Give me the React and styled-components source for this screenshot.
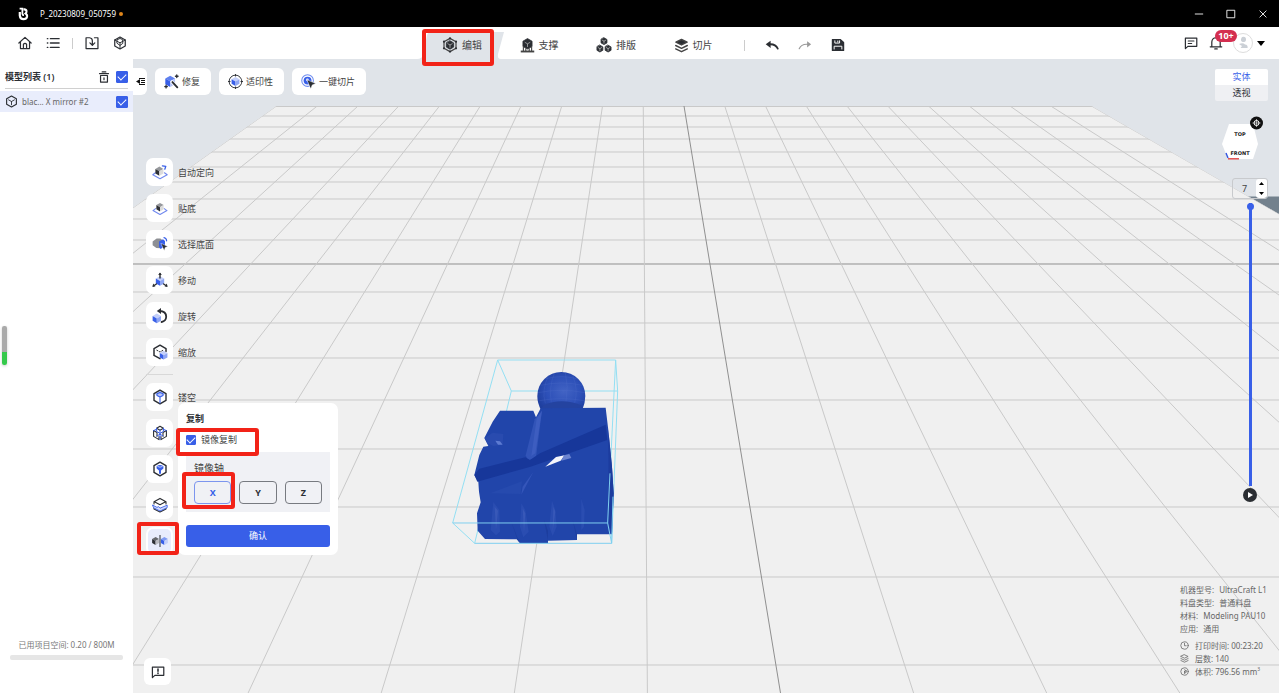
import { useState } from 'react';
import styled, { createGlobalStyle, css } from 'styled-components';

const colors = {
    ink: '#2b2e33',
    text: '#444',
    muted: '#777',
    blue: '#385fe8',
    scene: '#e0e4e9',
    red: '#f22318',
};

const GlobalStyle = createGlobalStyle`
    * {
        box-sizing: border-box;
    }
    body {
        margin: 0;
        background: #fff;
        color: ${ colors.text };
        font: 9px/12px "Noto Sans", "Noto Sans CJK SC", sans-serif;
    }
    button, input {
        font: inherit;
        color: inherit;
    }
    button {
        padding: 0;
        border: 0;
        background: none;
        cursor: pointer;
    }
    svg {
        display: block;
        flex: none;
    }
`;

const Page = styled.div`
    display: flex;
    flex-direction: column;
    min-height: 100vh;
`;

/* title bar */

const TitleBar = styled.header`
    display: flex;
    align-items: center;
    height: 27px;
    padding-left: 18px;
    background: #000;
    color: #fff;
`;

const ProjectName = styled.span`
    margin: 0 3px 0 11px;
    font-size: 8px;
`;

const UnsavedDot = styled.span`
    width: 4px;
    height: 4px;
    border-radius: 50%;
    background: #e0861a;
`;

const WindowButtons = styled.div`
    display: flex;
    margin-left: auto;
`;

const WindowButton = styled.button`
    display: grid;
    place-items: center;
    width: 32px;
    height: 27px;
`;

/* main toolbar */

const Toolbar = styled.nav`
    display: grid;
    grid-template-columns: 1fr auto 1fr;
    height: 32px;
    background: #fff;
`;

const ToolbarGroup = styled.div`
    display: flex;
    align-items: center;
    gap: ${ props => props.$gap || 0 }px;
`;

const LeftGroup = styled(ToolbarGroup)`
    padding-left: 17px;
`;

const RightGroup = styled(ToolbarGroup)`
    justify-content: flex-end;
    padding-right: 14px;
`;

const HistoryGroup = styled(ToolbarGroup)`
    padding-top: 4px;
`;

const IconButton = styled.button`
    position: relative;
    display: grid;
    place-items: center;
    width: ${ props => props.$width || 15 }px;
    height: 24px;
    color: ${ colors.ink };
`;

const Separator = styled.span`
    width: 1px;
    height: 11px;
    margin: 0 ${ props => props.$right }px 0 ${ props => props.$left }px;
    background: #ccc;
`;

const Tab = styled.button`
    position: relative;
    display: flex;
    align-items: center;
    justify-content: center;
    gap: 4px;
    width: 77px;
    height: 32px;
    padding: 4px 2px 0 0;
    font-size: 10px;
    & > svg, & > span {
        z-index: 1;
    }
`;

const TabShape = styled.svg`
    position: absolute;
    left: -8px;
    bottom: 0;
`;

const Highlight = styled.i`
    position: absolute;
    z-index: 3;
    inset: ${ props => props.$inset };
    border: 4px solid ${ colors.red };
    border-radius: 3px;
    pointer-events: none;
`;

const Badge = styled.b`
    position: absolute;
    z-index: 1;
    left: 7px;
    top: -1px;
    width: 22px;
    border-radius: 6px;
    background: #d42f50;
    color: #fff;
    font-size: 9px;
    line-height: 12px;
    text-align: center;
`;

const Avatar = styled.span`
    display: grid;
    place-items: center;
    width: 20px;
    height: 20px;
    border: 1px solid #ddd;
    border-radius: 50%;
    background: #fff;
`;

/* model list */

const Body = styled.div`
    display: flex;
    flex: 1;
`;

const Sidebar = styled.aside`
    position: relative;
    display: flex;
    flex-direction: column;
    flex: 0 0 133px;
    background: #fff;
`;

const ListHeader = styled.div`
    display: flex;
    align-items: center;
    gap: 5px;
    height: 30px;
    margin: 0 5px 2px;
    padding-top: 6px;
    border-bottom: 1px solid #d0d0d0;
    color: ${ colors.ink };
`;

const ListTitle = styled.h2`
    flex: 1;
    margin: 0;
    font-size: 9px;
    font-weight: 600;
`;

const ModelRow = styled.label`
    display: flex;
    align-items: center;
    gap: 4px;
    height: 21px;
    padding: 0 5px;
    background: #e9edfc;
    color: #666;
    font-size: 8px;
    & > span {
        flex: 1;
    }
`;

const Check = styled.input`
    position: relative;
    flex: none;
    appearance: none;
    width: ${ props => props.$size }px;
    height: ${ props => props.$size }px;
    margin: 0;
    border: 1px solid ${ colors.blue };
    border-radius: 1px;
    &:checked {
        background: ${ colors.blue };
    }
    &:checked::after {
        content: "";
        position: absolute;
        left: 50%;
        top: 50%;
        width: 7px;
        height: 4px;
        border: solid #fff;
        border-width: 0 0 1px 1px;
        transform: translate(-50%, -70%) rotate(-45deg);
    }
`;

const Storage = styled.div`
    margin: auto 10px 33px;
    color: ${ colors.muted };
    font-size: 8px;
    text-align: center;
    progress {
        display: block;
        appearance: none;
        width: 100%;
        height: 5px;
        margin-top: 4px;
        border: 0;
    }
    progress::-webkit-progress-bar {
        border-radius: 2px;
        background: #e6e6e6;
    }
    progress::-webkit-progress-value {
        background: #e6e6e6;
    }
`;

const EdgeMeter = styled.div`
    position: absolute;
    left: 2px;
    top: 267px;
    width: 5px;
    height: 39px;
    border-radius: 2px;
    background: linear-gradient(#aaa 0 26px, #35c94b 26px);
    box-shadow: 0 1px 3px #ccc;
`;

/* workspace */

const Workspace = styled.main`
    position: relative;
    display: flex;
    flex: 1;
    justify-content: space-between;
    background: ${ colors.scene };
`;

const SceneSvg = styled.svg`
    position: absolute;
    inset: 0;
    width: 100%;
    height: 100%;
`;

const LeftTools = styled.div`
    position: relative;
    display: flex;
    flex-direction: column;
    align-items: flex-start;
    padding: 9px 0 8px;
`;

const RightTools = styled.div`
    position: relative;
    display: flex;
    flex-direction: column;
    align-items: flex-end;
    padding: 10px 11px 15px 0;
`;

const PillRow = styled.div`
    display: flex;
    gap: 8px;
`;

const Pill = styled.button`
    display: flex;
    align-items: center;
    gap: 3px;
    height: 27px;
    padding: 0 11px 0 9px;
    border-radius: 6px;
    background: #fff;
`;

const CollapseButton = styled(Pill)`
    justify-content: center;
    width: 14px;
    padding: 0;
    border-radius: 0 6px 6px 0;
`;

const Rail = styled.div`
    position: relative;
    display: flex;
    flex-direction: column;
    gap: 8px;
    margin: 63px 0 0 13px;
`;

const Tool = styled.button`
    display: flex;
    align-items: center;
    gap: 5px;
`;

const ToolLabel = styled.span`
    padding-top: 2px;
`;

const ToolIcon = styled.span`
    display: grid;
    place-items: center;
    width: 27px;
    height: 28px;
    border-radius: 7px;
    background: ${ props => props.$active ? '#e8ecfc' : '#fff' };
    ${ props => props.$active && css`
        box-shadow: inset 0 0 0 2px #fff;
    ` }
`;

const RailDivider = styled.hr`
    width: 27px;
    height: 1px;
    margin: 0;
    border: 0;
    background: #d8d8d8;
`;

const FeedbackButton = styled.button`
    display: grid;
    place-items: center;
    width: 27px;
    height: 27px;
    margin: auto 0 0 11px;
    border-radius: 6px;
    background: #fff;
    color: ${ colors.ink };
`;

/* mirror panel */

const Panel = styled.form`
    position: absolute;
    left: 32px;
    bottom: 0;
    z-index: 2;
    display: flex;
    flex-direction: column;
    width: 160px;
    padding: 10px 8px 8px;
    border-radius: 7px;
    background: #fff;
`;

const PanelTitle = styled.h3`
    margin: 0 0 9px;
    color: ${ colors.ink };
    font-size: 9px;
    line-height: 12px;
`;

const CheckLabel = styled.label`
    position: relative;
    display: flex;
    align-items: center;
    gap: 5px;
    height: 12px;
    margin-bottom: 6px;
`;

const AxisBox = styled.fieldset`
    min-width: 0;
    height: 60px;
    margin: 0 0 13px;
    padding: 10px 8px 8px;
    border: 0;
    background: #f0f1f5;
`;

const AxisTitle = styled.div`
    margin-bottom: 7px;
    font-size: 10px;
`;

const AxisRow = styled.div`
    display: flex;
    gap: 8px;
`;

const AxisButton = styled.button`
    position: relative;
    flex: 1;
    height: 23px;
    border: 1px solid ${ props => props.$active ? '#7c95ee' : '#777a80' };
    border-radius: 4px;
    color: ${ props => props.$active ? colors.blue : colors.ink };
    font-weight: 700;
`;

const ConfirmButton = styled.button`
    height: 22px;
    border-radius: 3px;
    background: ${ colors.blue };
    color: #fff;
`;

/* view controls */

const ViewToggle = styled.div`
    display: grid;
    width: 53px;
    border-radius: 2px;
    overflow: hidden;
`;

const ViewButton = styled.button`
    height: 16px;
    background: ${ props => props.$active ? '#fff' : '#eff0f3' };
    color: ${ props => props.$active ? colors.blue : colors.ink };
`;

const CubeView = styled.svg`
    margin: 14px 4px 18px 0;
`;

const LayerControl = styled.div`
    display: flex;
    flex-direction: column;
    align-items: center;
    width: 36px;
`;

const LayerInput = styled.div`
    display: flex;
    width: 36px;
    height: 21px;
    margin-bottom: 4px;
    border: 1px solid #c8cacd;
    border-radius: 3px;
    input {
        width: 23px;
        padding: 0;
        border: 0;
        background: none;
        text-align: center;
        outline: 0;
    }
`;

const Stepper = styled.div`
    display: grid;
    flex: 1;
    border-radius: 3px;
    background: #fff;
    button {
        display: grid;
        place-items: center;
    }
`;

const LayerSlider = styled.input`
    appearance: none;
    writing-mode: vertical-lr;
    direction: rtl;
    width: 7px;
    height: 283px;
    margin: 0 0 2px;
    background: linear-gradient(${ colors.blue }, ${ colors.blue }) center / 3px 100% no-repeat;
    &::-webkit-slider-thumb {
        appearance: none;
        width: 7px;
        height: 7px;
        border-radius: 50%;
        background: ${ colors.blue };
    }
`;

const PlayButton = styled.button`
    display: grid;
    place-items: center;
    width: 14px;
    height: 14px;
    border-radius: 50%;
    background: ${ colors.ink };
`;

const PrintInfo = styled.dl`
    width: 88px;
    margin: auto 0 0;
    color: #666;
    font-size: 8px;
    line-height: 13px;
    white-space: nowrap;
`;

const InfoRow = styled.div`
    display: flex;
    align-items: center;
    gap: ${ props => props.$icon ? 2 : 5 }px;
    margin-top: ${ props => props.$gap ? 4 : 0 }px;
    & > svg {
        margin-right: 4px;
    }
    dd {
        margin: 0;
    }
    sup {
        font-size: 5px;
        line-height: 1px;
    }
`;

/* icons */

const Svg = ( { size = 14, children, ...rest } ) => (
    <svg width={ size } height={ size } viewBox="0 0 16 16" fill="none" stroke="currentColor"
        strokeWidth="1.4" strokeLinejoin="round" strokeLinecap="round" aria-hidden="true" { ...rest }>
        { children }
    </svg>
);

// Shaded cube centred on cx, cy
function Solid( { cx = 8, cy = 8, r = 4, top = '#c3cffa', left = colors.blue, right = '#8fa6f3' } ) {
    const w = r * 0.87;
    const h = r / 2;
    return (
        <g stroke="none">
            <path fill={ top } d={ `M${ cx } ${ cy - r }l${ w } ${ h }l${ -w } ${ h }l${ -w } ${ -h }z` } />
            <path fill={ left } d={ `M${ cx - w } ${ cy - h }l${ w } ${ h }v${ r }l${ -w } ${ -h }z` } />
            <path fill={ right } d={ `M${ cx + w } ${ cy - h }l${ -w } ${ h }v${ r }l${ w } ${ -h }z` } />
        </g>
    );
}

// Dark cube with light inner edges, used in the tabs
function DarkCube( { cx, cy, r, edge = 0.6 } ) {
    const w = r * 0.87;
    const h = r / 2;
    return (
        <>
            <path fill={ colors.ink } stroke={ colors.ink } strokeWidth=".8"
                d={ `M${ cx } ${ cy - r }l${ w } ${ h }v${ r }l${ -w } ${ h }l${ -w } ${ -h }v${ -r }z` } />
            <path stroke="#ddd" strokeWidth={ edge }
                d={ `M${ cx - w * 0.6 } ${ cy - h * 0.6 }L${ cx } ${ cy }L${ cx + w * 0.6 } ${ cy - h * 0.6 }M${ cx } ${ cy }v${ r * 0.6 }` } />
        </>
    );
}

const HEX = 'M8 1.2l6 3.4v6.8l-6 3.4l-6-3.4V4.6z';

const EditIcon = () => (
    <Svg size={ 16 } strokeWidth="1.2">
        <path d="M8 1.4l6 3.3v6.6l-6 3.3l-6-3.3V4.7z" />
        <DarkCube cx={ 8 } cy={ 8 } r={ 4.2 } />
        <g fill={ colors.ink } stroke="none">
            { [ [ 8, 1.4 ], [ 14, 4.7 ], [ 14, 11.3 ], [ 8, 14.6 ], [ 2, 11.3 ], [ 2, 4.7 ] ].map( ( [ x, y ] ) => (
                <circle key={ `${ x }-${ y }` } cx={ x } cy={ y } r="1.1" />
            ) ) }
        </g>
    </Svg>
);

const SupportIcon = () => (
    <Svg size={ 15 } strokeLinecap="butt">
        <DarkCube cx={ 8 } cy={ 6.2 } r={ 5.6 } />
        <path d="M3.6 9v5M6.2 11v3M9.8 11v3M12.4 9v5" strokeWidth="1.2" />
        <path d="M.8 14.4h14.4" strokeWidth="2" />
    </Svg>
);

const LayoutIcon = () => (
    <Svg size={ 16 }>
        <DarkCube cx={ 8 } cy={ 4.2 } r={ 3.4 } />
        <DarkCube cx={ 3.9 } cy={ 11.6 } r={ 3.4 } />
        <DarkCube cx={ 12.1 } cy={ 11.6 } r={ 3.4 } />
    </Svg>
);

const SliceIcon = () => (
    <Svg size={ 15 } strokeWidth="1.5">
        <path fill={ colors.ink } d="M8 1.6l6 2.9l-6 2.9l-6-2.9z" />
        <path d="M1.8 8l6.2 3l6.2-3M1.8 11.6l6.2 3l6.2-3" />
    </Svg>
);

const LogoIcon = () => (
    <svg width="11" height="14" viewBox="0 0 11 14" fill="none" stroke="#fff" aria-hidden="true">
        <path d="M1.600 1.600H4.400V6.800Q4.600 8.200 6 8.200" strokeWidth="1.800" />
        <path d="M5.400 2.400H6.600Q8.800 2.800 8.400 5Q8 6.200 7.600 6.600Q9.400 7.600 9 9.800Q8.400 12.200 5.600 12.200Q2.200 12.200 1.800 8.600V5" strokeWidth="2.200" />
    </svg>
);

const HomeIcon = () => (
    <Svg>
        <path d="M1 8l7-6.4L15 8M2.8 7v7.4h10.4V7M6.2 14V9.4q1.8-2 3.6 0V14" />
    </Svg>
);

const ListIcon = () => (
    <Svg>
        <path d="M5 3h10M5 8h10M5 13h10" strokeWidth="1.5" />
        <path d="M1.6 3h.4M1.6 8h.4M1.6 13h.4" strokeWidth="1.7" />
    </Svg>
);

const ImportIcon = () => (
    <Svg>
        <path d="M4.4 2H1.2v12.4h13.6V2h-4M1.2 2h4q3.2.4 3.2 3.4v5M5.6 7.8l2.8 2.8l2.8-2.8" />
    </Svg>
);

const CubeIcon = () => (
    <Svg>
        <path d={ HEX } />
        <path d="M2 4.6l6 3.2l6-3.2M8 14.4V8M5 4.2l3-1.4l3 1.4l.2 4.2L8 10.8L4.8 8.4z" strokeWidth="1.1" />
    </Svg>
);

const OutlineCube = ( { size = 13 } ) => (
    <Svg size={ size } stroke={ colors.ink } strokeWidth="1.4">
        <path d={ HEX } />
        <path d="M4.4 6L8 8l3.6-2M8 8v4" strokeWidth="1.1" />
    </Svg>
);

const UndoIcon = ( { color, flip } ) => (
    <Svg stroke={ color }>
        <g transform={ flip ? 'translate(16 0) scale(-1 1)' : undefined }>
            <path fill={ color } stroke="none" d={ flip ? 'M1 7.200L5.600 3.600v7.200z' : 'M.8 7.200L6.400 3v8.400z' } />
            <path d="M5 7.200q7-.6 9.600 5" strokeWidth={ flip ? 1.4 : 2 } />
        </g>
    </Svg>
);

const SaveIcon = () => (
    <Svg>
        <path fill="currentColor" d="M1.6 1.8h9.2l3.6 3.4v9H1.6z" />
        <path stroke="#fff" d="M4.4 3.2v2.6h5.4V3.2M7.8 3.4v1.2M3.6 12.6V9.4h8.8v3.2" strokeWidth="1.1" />
        <path stroke="currentColor" d="M5 11.4h6" strokeWidth="1" />
    </Svg>
);

const MessageIcon = ( { alert } ) => (
    <Svg>
        <path d="M1.6 14.4V2.4h13v9.4H4.4z" />
        { alert
            ? <path d="M8 4.600v2.400M8 9.200v.4" strokeWidth="1.800" />
            : <path d="M4.8 5.6h6.6M4.8 8.6h4" strokeWidth="1.2" /> }
    </Svg>
);

const BellIcon = () => (
    <Svg>
        <path d="M1.4 12.4h13.2M3.2 12.2V6.8q.4-4.6 4.8-4.8q4.4.2 4.8 4.8v5.4M6.6 14.8h2.8" />
    </Svg>
);

const TrashIcon = () => (
    <Svg size={ 12 } strokeWidth="1.6">
        <path d="M2 3.4h12M5.600 1.200h4.800M3.400 6v8.800h9.200V6M3.400 6h9.200M8 9v2.600" />
    </Svg>
);

const CollapseIcon = () => (
    <svg width="9" height="8" viewBox="0 0 9 8" fill="#111" aria-hidden="true">
        <path d="M3 0h6v1H3zM5 2h4v1H5zM5 4h4v1H5zM3 6h6v1H3zM0 3.500L4 1v5z" />
    </svg>
);

const RepairIcon = () => (
    <Svg size={ 15 }>
        <Solid cx={ 6.6 } cy={ 7.8 } r={ 6 } top="#5f80ee" right="#b3c2f8" />
        <path d="M8.6 8.4l5.4 5.8" stroke="#fff" strokeWidth="3.4" />
        <path d="M9 8.6l5.2 5.6" stroke={ colors.ink } strokeWidth="2" />
        <path d="M13.6 1v2.8M12.2 2.4H15M2.2 12v2.8M.8 13.4h2.8" stroke={ colors.ink } />
    </Svg>
);

const PrintableIcon = () => (
    <Svg size={ 15 } stroke={ colors.ink } strokeWidth="1">
        <circle cx="8" cy="8" r="6.8" />
        <Solid r={ 4.8 } />
        <path d="M8 .2v2M8 13.8v2M.2 8h2M13.8 8h2" />
    </Svg>
);

const QuickSliceIcon = () => (
    <Svg size={ 15 }>
        <circle cx="7" cy="7" r="6.2" stroke="#6f8df0" strokeWidth="1.1" />
        <circle cx="7" cy="7" r="4.2" fill={ colors.blue } stroke="none" />
        <circle cx="6.8" cy="6.2" r="1.6" fill="#c3cffa" stroke="none" />
        <path d="M6.6 6.2l9.2 4l-3.8 1.4l-1.600 4.200z" fill={ colors.ink } stroke="#fff" strokeWidth=".5" />
    </Svg>
);

const gray = { top: '#96989c', left: '#2f3135', right: '#dcdcdc' };

const TOOL_ART = {
    orient: <>
        <path d="M3.4 8.8L.8 10.8l7.2 4l7.2-4l-2.8-2" stroke="#7189ee" strokeWidth="1.1" />
        <Solid cx={ 7.4 } cy={ 7.2 } r={ 4.6 } { ...gray } />
        <path d="M10.4 1.8l3.4.6l-1 2.8" stroke={ colors.blue } strokeWidth="1.3" />
    </>,
    flatten: <>
        <path d="M3.6 8.6L1 10.6l7 3.8l7-3.8l-2.8-2" stroke="#7189ee" strokeWidth="1.1" />
        <Solid cx={ 8 } cy={ 7.2 } r={ 4.2 } { ...gray } />
    </>,
    face: <>
        <path fill="#8d8f94" stroke="none" d="M.6 5.4l4-3h3.8l2.2 1.8l-2 8L4.4 12L.6 9.2z" />
        <path fill={ colors.blue } stroke="none" d="M7 5.4l4-2.2l2 1.8v5L8.600 13L7 11z" />
        <path d="M12 1.600q2.400.4 2.600 3.200" stroke={ colors.blue } strokeWidth="1.2" />
        <path fill={ colors.ink } stroke="#fff" strokeWidth=".4" d="M9.2 7.400l6.600 3l-2.600 1l-1 3.200z" />
    </>,
    move: <>
        <Solid cx={ 8 } cy={ 9 } r={ 4.8 } />
        <path d="M8 1.6V6M1.4 14l3-2M14.6 14l-3-2" stroke={ colors.ink } strokeWidth="1.4" />
        <path fill={ colors.ink } stroke="none" d="M8 .4l1.800 2.600H6.200zM.4 14.800l.8-3.400l2.200 3zM15.600 14.800l-.8-3.400l-2.200 3z" />
    </>,
    rotate: <>
        <path d="M7.4 3q6.8.2 6.8 5.8q-.2 4.4-4.6 5.2" stroke={ colors.ink } strokeWidth="1.8" />
        <path fill={ colors.ink } stroke="none" d="M4.8 3L9 0v6z" />
        <Solid cx={ 4.8 } cy={ 10.4 } r={ 4.8 } />
    </>,
    scale: <>
        <path d="M8 14.6l-6-3.2V4.6l6-3.4l6 3.4v3" stroke={ colors.ink } strokeWidth="1.5" />
        <path d="M4.8 6.2L8 8l3.2-1.8" stroke={ colors.ink } strokeWidth="1" strokeDasharray="1.2 1.6" />
        <Solid cx={ 11.6 } cy={ 11.2 } r={ 4.4 } />
    </>,
    hollow: <>
        <path fill="#b9c6f8" stroke="none" d="M8 2l5.4 3L8 8L2.6 5z" />
        <path d={ HEX } stroke={ colors.ink } />
        <path d="M5 6.4v-1.6L8 3.4l3 1.4v1.6L8 8zM8 8v6" stroke={ colors.blue } strokeWidth="1.1" />
    </>,
    split: <>
        <g stroke={ colors.ink } strokeWidth="1.1">
            <path d="M8 1.2l3.4 2L8 5.2L4.6 3.2zM1.6 5.6L5 7.4v3.8M1.6 5.6v5.8L7 14.6v-3M14.4 5.6L11 7.4v3.8M14.4 5.6v5.8L9 14.6v-3" />
        </g>
        <path d="M4.6 3.2v3.2L8 8.4l3.4-2V3.2M8 5.2v9M1.6 5.6l3-1.4M14.4 5.6l-3-1.4M5 11l3-1.8l3 1.8" stroke={ colors.blue } strokeWidth="1" />
    </>,
    punch: <>
        <path d={ HEX } stroke={ colors.ink } />
        <path fill={ colors.blue } stroke="none" d="M4.6 5.2Q8 2.6 11.4 5.2v2.4L9 9.6v3.2H7V9.6L4.6 7.6z" />
        <path d="M5.8 5.6q2.2 1.4 4.4 0" stroke="#dfe6fd" strokeWidth=".8" />
    </>,
    cut: <>
        <path d="M2 7V4.8l6-3.4l6 3.4V7M2.400 4.800L8 7.800l5.600-3M2 11v1l6 3l6-3v-1" stroke={ colors.ink } strokeWidth="1.1" />
        <path fill="#d5ddfb" stroke={ colors.blue } strokeWidth=".9" d="M.8 8.200L5 10.400q1.600-2 3 .8l7.200-3v2.400L8 14L2 11z" />
    </>,
    mirror: <>
        <Solid cx={ 3.6 } cy={ 8 } r={ 4 } top="#66686d" left={ colors.ink } right="#b9bac0" />
        <Solid cx={ 12.4 } cy={ 8 } r={ 4 } left={ colors.blue } right="#c3cffa" top="#7f9af2" />
        <path d="M8 2v12" stroke={ colors.ink } strokeWidth="1" strokeLinecap="butt" />
    </>,
};

/* build plate: lines fan out between these two rows */

const PLATE_TOP = 106;
const PLATE_BOTTOM = 693;
const COLUMNS = Array.from( { length: 21 }, ( _, i ) => i - 10 );
const ROWS = [ 116, 127, 139, 152, 167, 182, 199, 219, 240, 264, 292, 323, 358, 400, 449, 507, 577, 665 ];
const topX = i => 684 + 40.75 * i;
const bottomX = i => 780.5 + 133.1 * i;

function Scene() {
    const plate = [
        [ topX( -10 ), PLATE_TOP ],
        [ topX( 10 ), PLATE_TOP ],
        [ bottomX( 10 ), PLATE_BOTTOM ],
        [ bottomX( -10 ), PLATE_BOTTOM ],
    ].join( ' ' );
    return (
        <SceneSvg viewBox="133 59 1146 634" preserveAspectRatio="xMidYMin slice" role="img" aria-label="3D">
            <defs>
                <clipPath id="plate"><polygon points={ plate } /></clipPath>
                <radialGradient id="ball" cx=".55" cy=".5" r=".6">
                    <stop offset="0" stopColor="#4263c4" />
                    <stop offset=".6" stopColor="#2d50b8" />
                    <stop offset="1" stopColor="#1f3f9f" />
                </radialGradient>
            </defs>
            <path fill="#73818d" d="M1244 196.5h35v20h-20z" />
            <polygon points={ plate } fill="#f0f0f0" />
            <g clipPath="url(#plate)" stroke="#c9c9c9">
                <line x1="0" x2="1400" y1={ PLATE_TOP } y2={ PLATE_TOP } strokeWidth="2" />
                { ROWS.map( y => (
                    <line key={ y } x1="0" x2="1400" y1={ y } y2={ y }
                        stroke={ y === 264 ? '#8f8f8f' : undefined } />
                ) ) }
                { COLUMNS.map( i => (
                    <line key={ i } x1={ topX( i ) } y1={ PLATE_TOP } x2={ bottomX( i ) } y2={ PLATE_BOTTOM }
                        stroke={ i === 0 ? '#8f8f8f' : undefined } />
                ) ) }
            </g>
            <Model />
        </SceneSvg>
    );
}

function Model() {
    return (
        <g transform="translate(440 340) scale(.3333)">
            <path fill="none" stroke="#93dff3" strokeWidth="3"
                d="M173 60H527L533 153H214L173 60L38 549L104 610L214 153M527 60L503 549M533 153L515 610" />
            <path fill="url(#ball)" d="M304 212Q292 190 292 168A72 72 0 0 1 436 168Q436 190 426 212z" />
            <g fill="none" stroke="#5876cf" strokeWidth="1.5" opacity=".45">
                <path d="M318 116Q364 104 410 116M302 136Q364 122 428 136M294 158Q364 144 435 158M298 182Q364 170 432 182" />
                <path d="M344 98Q326 140 334 188M376 96Q386 140 378 186M398 106Q416 150 404 188M326 106Q304 150 316 190" />
            </g>
            <path fill="#2443a0" d="M310 196Q364 172 424 196L426 206H304z" />
            <path fill="#2145aa" d="M180 212H280L288 232L302 205L497 203L505 270L516 380L521 460L516 583H411V600L324 602V610H240L230 598L135 597L113 572L111 520L122 487L117 455L115 425L103 405L118 345L130 320L145 318L133 294L158 245z" />
            <path fill="#1c3c9f" d="M505 270L516 380L521 460L516 583L506 550z" />
            <path fill="#3254b8" d="M284 238L306 212L288 352L264 362L257 346z" />
            <path fill="#4564c4" opacity=".6" d="M290 236L306 212L286 340L274 348z" />
            <path fill="#17379a" d="M103 405L118 386L256 352L270 360L300 340L497 254L502 300L272 380L112 425z" />
            <path fill="#3556ba" d="M280 396L248 440L244 464z" />
            <path fill="#264aae" d="M150 460L246 424L242 462z" />
            <path fill="#294baf" d="M134 294L158 278L190 282L188 314L160 318L142 310z" />
            <path fill="#5d7bd2" d="M166 302L180 304L188 314L174 314z" />
            <path fill="#f4f5fb" d="M316 380L348 351L374 346L362 362z" />
            <path fill="#6b83d0" d="M372 346L388 342L394 354L364 362z" />
            <g fill="#2a4db1">
                <path d="M160 486L178 510L180 575L168 586L152 570z" />
                <path d="M244 490L256 510L266 575L250 592L240 560z" />
                <path d="M336 482L346 510L350 560L338 588L328 560z" />
                <path d="M424 476L434 510L432 560L424 570z" />
            </g>
            <path fill="#4967c2" d="M164 500L174 512L168 570zM248 505L256 520L252 580zM340 500L346 515L338 575z" opacity=".45" />
            <path fill="#1d3e9f" d="M212 540L232 592L240 610L232 598zM312 540L324 572V602zM398 540L411 583V600z" />
            <path fill="none" stroke="#7fd0f0" strokeWidth="3" d="M38 549H503L515 610H104M503 549L510 400M515 610L519 470" />
        </g>
    );
}

const TABS = [
    { label: '编辑', icon: <EditIcon /> },
    { label: '支撑', icon: <SupportIcon /> },
    { label: '排版', icon: <LayoutIcon /> },
    { label: '切片', icon: <SliceIcon /> },
];

const TOOLS = [
    { id: 'orient', label: '自动定向' },
    { id: 'flatten', label: '贴底' },
    { id: 'face', label: '选择底面' },
    { id: 'move', label: '移动' },
    { id: 'rotate', label: '旋转' },
    { id: 'scale', label: '缩放' },
    { id: 'hollow', label: '镂空', divider: true },
    { id: 'split' },
    { id: 'punch' },
    { id: 'cut' },
    { id: 'mirror' },
];

function TopBar() {
    return (
        <>
            <TitleBar>
                <LogoIcon />
                <ProjectName>P_20230809_050759</ProjectName>
                <UnsavedDot />
                <WindowButtons>
                    <WindowButton aria-label="minimize"><Svg size={ 10 }><path d="M2 8h12" /></Svg></WindowButton>
                    <WindowButton aria-label="maximize"><Svg size={ 10 }><path d="M2 2h12v12H2z" /></Svg></WindowButton>
                    <WindowButton aria-label="close"><Svg size={ 10 }><path d="M3 3l10 10M13 3L3 13" /></Svg></WindowButton>
                </WindowButtons>
            </TitleBar>
            <Toolbar>
                <LeftGroup>
                    <ToolbarGroup $gap={ 13 }>
                        <IconButton aria-label="home"><HomeIcon /></IconButton>
                        <IconButton aria-label="list"><ListIcon /></IconButton>
                    </ToolbarGroup>
                    <Separator $left={ 12 } $right={ 11 } />
                    <ToolbarGroup $gap={ 13 }>
                        <IconButton aria-label="import"><ImportIcon /></IconButton>
                        <IconButton aria-label="models"><CubeIcon /></IconButton>
                    </ToolbarGroup>
                </LeftGroup>
                <ToolbarGroup>
                    { TABS.map( ( { label, icon }, i ) => (
                        <Tab key={ label }>
                            { i === 0 &&
                                <TabShape width="90" height="27" viewBox="0 0 90 27" aria-hidden="true">
                                    <path fill={ colors.scene } d="M0 27Q5 27 6 23L10 3Q11 0 14 0H87L81 22Q80 27 84 27z" />
                                </TabShape>
                            }
                            { icon }
                            <span>{ label }</span>
                            { i === 0 && <Highlight $inset="2px 8px -7px -3px" /> }
                        </Tab>
                    ) ) }
                    <HistoryGroup>
                        <Separator $left={ 11 } $right={ 11 } />
                        <IconButton $width={ 33 } aria-label="undo"><UndoIcon color={ colors.ink } /></IconButton>
                        <IconButton $width={ 33 } aria-label="redo"><UndoIcon color="#999" flip /></IconButton>
                        <IconButton $width={ 33 } aria-label="save"><SaveIcon /></IconButton>
                    </HistoryGroup>
                </ToolbarGroup>
                <RightGroup $gap={ 10 }>
                    <IconButton aria-label="messages"><MessageIcon /></IconButton>
                    <IconButton aria-label="notifications">
                        <BellIcon />
                        <Badge>10+</Badge>
                    </IconButton>
                    <ToolbarGroup $gap={ 4 }>
                        <Avatar>
                            <svg width="12" height="14" viewBox="0 0 12 14" fill="#cbd0d6" aria-hidden="true">
                                <path d="M5 1q4-1 4 2.4Q9 6 6 6Q3.600 5.600 4 3zM2 8q4-2 6 .6q3 .4 2.600 3.400H3.600L5 10z" />
                            </svg>
                        </Avatar>
                        <svg width="8" height="5" viewBox="0 0 8 5" aria-hidden="true"><path d="M0 0h8L4 5z" /></svg>
                    </ToolbarGroup>
                </RightGroup>
            </Toolbar>
        </>
    );
}

function ModelList() {
    return (
        <Sidebar>
            <ListHeader>
                <ListTitle>模型列表 (1)</ListTitle>
                <IconButton aria-label="delete"><TrashIcon /></IconButton>
                <Check type="checkbox" $size={ 12 } defaultChecked aria-label="all" />
            </ListHeader>
            <ModelRow>
                <OutlineCube />
                <span>blac... X mirror #2</span>
                <Check type="checkbox" $size={ 12 } defaultChecked />
            </ModelRow>
            <Storage>
                <label htmlFor="storage">已用项目空间: 0.20 / 800M</label>
                <progress id="storage" max="800" value="0.2" />
            </Storage>
            <EdgeMeter />
        </Sidebar>
    );
}

function MirrorPanel() {
    const [ axis, setAxis ] = useState( 'X' );
    return (
        <Panel onSubmit={ ev => ev.preventDefault() }>
            <PanelTitle>复制</PanelTitle>
            <CheckLabel>
                <Check type="checkbox" $size={ 10 } defaultChecked />
                镜像复制
                <Highlight $inset="-6px 71px -10px -10px" />
            </CheckLabel>
            <AxisBox aria-label="镜像轴">
                <AxisTitle>镜像轴</AxisTitle>
                <AxisRow>
                    { [ 'X', 'Y', 'Z' ].map( name => (
                        <AxisButton key={ name } type="button" $active={ axis === name } onClick={ () => setAxis( name ) }>
                            { name }
                            { name === 'X' && <Highlight $inset="-10px -5px -6px -13px" /> }
                        </AxisButton>
                    ) ) }
                </AxisRow>
            </AxisBox>
            <ConfirmButton>确认</ConfirmButton>
        </Panel>
    );
}

function ToolRail() {
    return (
        <Rail>
            { TOOLS.map( ( { id, label, divider } ) => [
                divider && <RailDivider key={ `${ id }-divider` } />,
                <Tool key={ id } aria-label={ label || id }>
                    <ToolIcon $active={ id === 'mirror' }><Svg size={ 16 }>{ TOOL_ART[ id ] }</Svg></ToolIcon>
                    { label && <ToolLabel>{ label }</ToolLabel> }
                </Tool>,
            ] ) }
            <ActiveToolMark $inset="auto auto 0 -9px" />
            <MirrorPanel />
        </Rail>
    );
}

const ActiveToolMark = styled(Highlight)`
    width: 42px;
    height: 33px;
`;

function ViewControls() {
    const [ layer, setLayer ] = useState( 7 );
    return (
        <RightTools>
            <ViewToggle>
                <ViewButton $active>实体</ViewButton>
                <ViewButton>透视</ViewButton>
            </ViewToggle>
            <CubeView width="42" height="45" viewBox="1222 115 42 45" aria-hidden="true">
                <path fill="#fff" d="M1229 124H1253L1258 144L1253 159H1228L1222 144z" />
                <g fontFamily="DejaVu Sans" fontWeight="700" fill="#222" textAnchor="middle" fontSize="5">
                    <text x="1240" y="136">TOP</text>
                    <text x="1240" y="155">FRONT</text>
                </g>
                <path stroke="#3355e0" strokeWidth="1.400" fill="none" d="M1226 153l2 5" />
                <path stroke="#e04545" strokeWidth="1.400" fill="none" d="M1228 158.800h11" />
                <circle cx="1256.500" cy="123" r="6.500" fill="#111" />
                <g fill="none" stroke="#fff">
                    <circle cx="1256.500" cy="123" r="2.500" />
                    <path d="M1256.500 119v8M1252.500 123h8" strokeWidth=".6" />
                </g>
            </CubeView>
            <LayerControl>
                <LayerInput>
                    <input aria-label="layer" value={ layer } onChange={ ev => setLayer( ev.target.value ) } />
                    <Stepper>
                        <button aria-label="up" onClick={ () => setLayer( Number( layer ) + 1 ) }>
                            <svg width="5" height="3" viewBox="0 0 5 3"><path d="M0 3h5L2.500 0z" /></svg>
                        </button>
                        <button aria-label="down" onClick={ () => setLayer( Number( layer ) - 1 ) }>
                            <svg width="5" height="3" viewBox="0 0 5 3"><path d="M0 0h5L2.500 3z" /></svg>
                        </button>
                    </Stepper>
                </LayerInput>
                <LayerSlider type="range" aria-label="layers" min="0" max="140" defaultValue="140" />
                <PlayButton aria-label="play">
                    <svg width="5" height="6" viewBox="0 0 5 6"><path fill="#fff" d="M0 0l5 3l-5 3z" /></svg>
                </PlayButton>
            </LayerControl>
            <PrintInfo>
                <InfoRow><dt>机器型号:</dt><dd>UltraCraft L1</dd></InfoRow>
                <InfoRow><dt>料盘类型:</dt><dd>普通料盘</dd></InfoRow>
                <InfoRow><dt>材料:</dt><dd>Modeling PAU10</dd></InfoRow>
                <InfoRow><dt>应用:</dt><dd>通用</dd></InfoRow>
                <InfoRow $icon $gap>
                    <Svg size={ 9 }><circle cx="8" cy="8" r="6.600" /><path d="M8 4v4.400h3" /></Svg>
                    <dt>打印时间:</dt><dd>00:23:20</dd>
                </InfoRow>
                <InfoRow $icon>
                    <Svg size={ 9 }><path d="M8 1.400l6.400 3L8 7.400l-6.400-3zM1.600 8L8 11l6.400-3M1.600 11.600l6.400 3l6.400-3" /></Svg>
                    <dt>层数:</dt><dd>140</dd>
                </InfoRow>
                <InfoRow $icon>
                    <Svg size={ 9 }><circle cx="8" cy="8" r="6.600" /><path d="M8 5l3 1.600v3L8 11M8 8l3-1.400M8 8v3" /></Svg>
                    <dt>体积:</dt><dd>796.56 mm<sup>3</sup></dd>
                </InfoRow>
            </PrintInfo>
        </RightTools>
    );
}

export default function App() {
    return (
        <Page>
            <GlobalStyle />
            <TopBar />
            <Body>
                <ModelList />
                <Workspace>
                    <Scene />
                    <LeftTools>
                        <PillRow>
                            <CollapseButton aria-label="collapse"><CollapseIcon /></CollapseButton>
                            <Pill><RepairIcon />修复</Pill>
                            <Pill><PrintableIcon />适印性</Pill>
                            <Pill><QuickSliceIcon />一键切片</Pill>
                        </PillRow>
                        <ToolRail />
                        <FeedbackButton aria-label="feedback"><MessageIcon alert /></FeedbackButton>
                    </LeftTools>
                    <ViewControls />
                </Workspace>
            </Body>
        </Page>
    );
}
